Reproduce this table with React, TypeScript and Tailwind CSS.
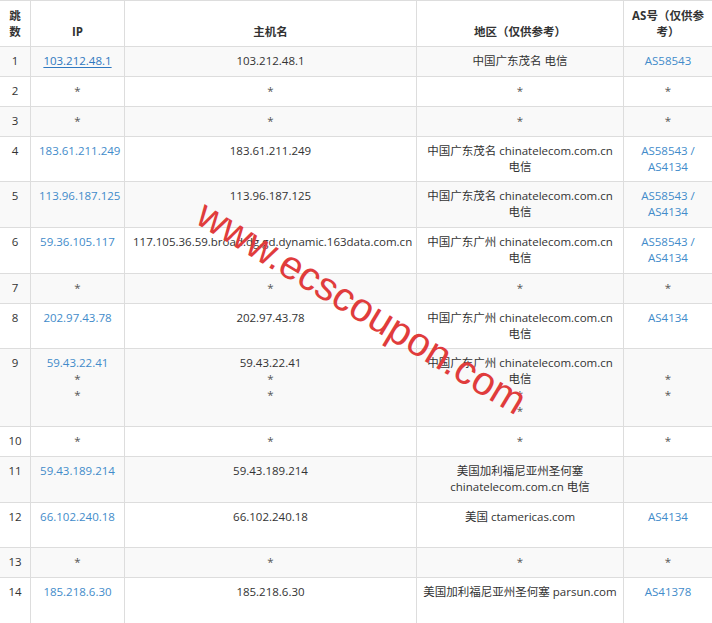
import React from "react";

type Row = {
  hop: string;
  h: string;
  ip: string[];
  host: string[];
  region: string[];
  as: string[];
  underline?: boolean;
};

const star = ["*"];

const rows: Row[] = [
  { hop: "1", h: "h-[30px]", ip: ["103.212.48.1"], host: ["103.212.48.1"], region: ["中国广东茂名 电信"], as: ["AS58543"], underline: true },
  { hop: "2", h: "h-[30px]", ip: star, host: star, region: star, as: star },
  { hop: "3", h: "h-[30px]", ip: star, host: star, region: star, as: star },
  { hop: "4", h: "h-[45px]", ip: ["183.61.211.249"], host: ["183.61.211.249"], region: ["中国广东茂名 chinatelecom.com.cn 电信"], as: ["AS58543 / AS4134"] },
  { hop: "5", h: "h-[46px]", ip: ["113.96.187.125"], host: ["113.96.187.125"], region: ["中国广东茂名 chinatelecom.com.cn 电信"], as: ["AS58543 / AS4134"] },
  { hop: "6", h: "h-[46px]", ip: ["59.36.105.117"], host: ["117.105.36.59.broad.dg.gd.dynamic.163data.com.cn"], region: ["中国广东广州 chinatelecom.com.cn 电信"], as: ["AS58543 / AS4134"] },
  { hop: "7", h: "h-[30px]", ip: star, host: star, region: star, as: star },
  { hop: "8", h: "h-[45px]", ip: ["202.97.43.78"], host: ["202.97.43.78"], region: ["中国广东广州 chinatelecom.com.cn 电信"], as: ["AS4134"] },
  { hop: "9", h: "h-[78px]", ip: ["59.43.22.41", "*", "*"], host: ["59.43.22.41", "*", "*"], region: ["中国广东广州 chinatelecom.com.cn 电信", "*", "*"], as: ["\u00a0", "*", "*"] },
  { hop: "10", h: "h-[30px]", ip: star, host: star, region: star, as: star },
  { hop: "11", h: "h-[46px]", ip: ["59.43.189.214"], host: ["59.43.189.214"], region: ["美国加利福尼亚州圣何塞 chinatelecom.com.cn 电信"], as: [] },
  { hop: "12", h: "h-[45px]", ip: ["66.102.240.18"], host: ["66.102.240.18"], region: ["美国 ctamericas.com"], as: ["AS4134"] },
  { hop: "13", h: "h-[30px]", ip: star, host: star, region: star, as: star },
  { hop: "14", h: "h-[46px]", ip: ["185.218.6.30"], host: ["185.218.6.30"], region: ["美国加利福尼亚州圣何塞 parsun.com"], as: ["AS41378"] },
];

const grid = "grid grid-cols-[30px_94px_292px_207px_89px]";

function Lines({ lines, blue, under }: { lines: string[]; blue?: boolean; under?: boolean }) {
  return (
    <>
      {lines.map((t, i) => {
        const isStar = t === "*";
        const cls = isStar
          ? "text-[#555]"
          : blue
          ? under
            ? "text-[#2f78c0] underline underline-offset-2"
            : "text-[#428bca]"
          : "";
        return (
          <div key={i}>
            <span className={cls}>{t}</span>
          </div>
        );
      })}
    </>
  );
}

export default function App() {
  return (
    <div className="relative w-[712px] h-[623px] overflow-hidden bg-white text-[#333] text-[11.5px] leading-4 font-['Open_Sans','Noto_Sans_CJK_SC',sans-serif]">
      {/* header */}
      <div className={`${grid} h-[47px] border-y border-[#ddd] font-bold text-center`}>
        <div className="flex flex-col justify-end px-2 pb-[6px]">
          <div>跳</div>
          <div>数</div>
        </div>
        <div className="flex flex-col justify-end border-l border-[#ddd] px-2 pb-[6px]">IP</div>
        <div className="flex flex-col justify-end border-l border-[#ddd] px-2 pb-[6px]">主机名</div>
        <div className="flex flex-col justify-end border-l border-[#ddd] px-2 pb-[6px]">地区（仅供参考）</div>
        <div className="flex flex-col justify-end border-l border-[#ddd] px-2 pb-[6px]">
          <div>AS号（仅供参</div>
          <div>考）</div>
        </div>
      </div>

      {rows.map((r, idx) => (
        <div
          key={r.hop}
          className={`${grid} ${r.h} border-b border-[#ddd] text-center ${idx % 2 === 0 ? "bg-[#f9f9f9]" : "bg-white"}`}
        >
          <div className="pt-[6px]">{r.hop}</div>
          <div className="border-l border-[#ddd] px-2 pt-[6px]">
            <Lines lines={r.ip} blue under={r.underline} />
          </div>
          <div className="border-l border-[#ddd] px-2 pt-[6px] whitespace-nowrap">
            <Lines lines={r.host} />
          </div>
          <div className={`border-l border-[#ddd] px-1 pt-[6px] ${r.hop === "14" ? "whitespace-nowrap" : ""}`}>
            <Lines lines={r.region} />
          </div>
          <div className="border-l border-[#ddd] px-2 pt-[6px]">
            <Lines lines={r.as} blue />
          </div>
        </div>
      ))}

      {/* watermark */}
      <div className="absolute left-[362px] top-[307px] -translate-x-1/2 -translate-y-1/2 rotate-[31deg] whitespace-nowrap text-[40px] leading-none text-[#e03c3c] font-['Liberation_Sans',Arial,sans-serif] pointer-events-none">
        www.ecscoupon.com
      </div>
    </div>
  );
}
